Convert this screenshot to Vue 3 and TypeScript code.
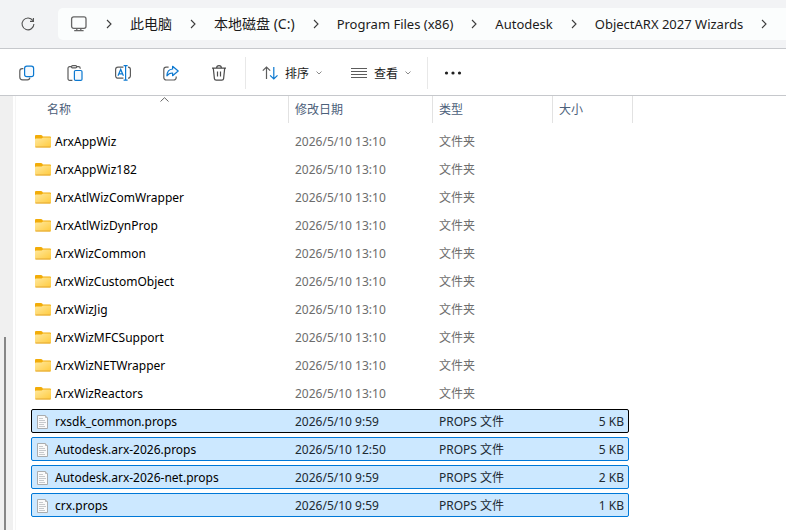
<script setup lang="ts">
interface Entry {
  name: string
  modified: string
  kind: string
  size: string
  selected: boolean
}

interface Crumb {
  label: string
  latin: boolean
}

const crumbs: Crumb[] = [
  { label: '此电脑', latin: false },
  { label: '本地磁盘 (C:)', latin: false },
  { label: 'Program Files (x86)', latin: true },
  { label: 'Autodesk', latin: true },
  { label: 'ObjectARX 2027 Wizards', latin: true },
]

const folderNames: string[] = [
  'ArxAppWiz',
  'ArxAppWiz182',
  'ArxAtlWizComWrapper',
  'ArxAtlWizDynProp',
  'ArxWizCommon',
  'ArxWizCustomObject',
  'ArxWizJig',
  'ArxWizMFCSupport',
  'ArxWizNETWrapper',
  'ArxWizReactors',
]

const folders: Entry[] = folderNames.map((name) => ({
  name,
  modified: '2026/5/10 13:10',
  kind: '文件夹',
  size: '',
  selected: false,
}))

const files: Entry[] = [
  { name: 'rxsdk_common.props', modified: '2026/5/10 9:59', kind: 'PROPS 文件', size: '5 KB', selected: true },
  { name: 'Autodesk.arx-2026.props', modified: '2026/5/10 12:50', kind: 'PROPS 文件', size: '5 KB', selected: true },
  { name: 'Autodesk.arx-2026-net.props', modified: '2026/5/10 9:59', kind: 'PROPS 文件', size: '2 KB', selected: true },
  { name: 'crx.props', modified: '2026/5/10 9:59', kind: 'PROPS 文件', size: '1 KB', selected: true },
]

const entries: Entry[] = [...folders, ...files]
const focusedName = 'rxsdk_common.props'
</script>

<template>
  <div class="explorer">
    <header class="address-bar">
      <button class="refresh" type="button" aria-label="刷新">
        <svg width="16" height="16" viewBox="0 0 16 16" fill="none" stroke="#505050" stroke-width="1.1">
          <path d="M12.9 4.6A5.9 5.9 0 1 0 13.9 8" />
          <path d="M13.4 2V5.4H10" />
        </svg>
      </button>
      <nav class="crumbs">
        <button class="crumb-icon" type="button" aria-label="位置">
          <svg width="18" height="16" viewBox="0 0 18 16" fill="none" stroke="#666" stroke-width="1.3">
            <rect x="1.6" y="0.9" width="14.4" height="11.4" rx="2" />
            <path d="M6.8 12.3V14.4M10.8 12.3V14.4M4.2 14.6H13.6" />
          </svg>
        </button>
        <template v-for="crumb in crumbs" :key="crumb.label">
          <svg class="chevron" width="6" height="10" viewBox="0 0 6 10" fill="none" stroke="#3c3c3c" stroke-width="1.1">
            <path d="M1 1L5 5L1 9" />
          </svg>
          <a class="crumb" :class="{ latin: crumb.latin }" href="#">{{ crumb.label }}</a>
        </template>
        <svg class="chevron" width="6" height="10" viewBox="0 0 6 10" fill="none" stroke="#3c3c3c" stroke-width="1.1">
          <path d="M1 1L5 5L1 9" />
        </svg>
      </nav>
    </header>

    <div class="toolbar" role="toolbar">
      <div class="tools">
        <button class="tool" type="button" aria-label="复制">
          <svg width="16" height="16" viewBox="0 0 16 16" fill="none" stroke-width="1.2">
            <path d="M4.4 3.6H3.2A2.4 2.4 0 0 0 .8 6V12A2.8 2.8 0 0 0 3.6 14.8H8.4A2.4 2.4 0 0 0 10.8 12.6" stroke="#5c5c5c" />
            <rect x="5.6" y="1.1" width="9" height="10.6" rx="2.2" stroke="#0b78d0" fill="#f4f9fe" />
          </svg>
        </button>
        <button class="tool" type="button" aria-label="粘贴">
          <svg width="16" height="16" viewBox="0 0 16 16" fill="none" stroke-width="1.2">
            <path d="M4.5 1.6H2.6A1.6 1.6 0 0 0 1 3.2V13.8A1.6 1.6 0 0 0 2.6 15.4H5.4M9.6 1.6H11.6A1.6 1.6 0 0 1 13.2 3.2V3.8" stroke="#5c5c5c" />
            <rect x="4.5" y="0.6" width="5.2" height="2.2" rx="1.1" stroke="#5c5c5c" />
            <rect x="7.4" y="5.5" width="7.6" height="9.9" rx="1.2" stroke="#0b78d0" fill="#f4f9fe" />
          </svg>
        </button>
        <button class="tool" type="button" aria-label="重命名">
          <svg width="16" height="16" viewBox="0 0 16 16" fill="none" stroke-width="1.2">
            <path d="M8.4 2.2H3A2.4 2.4 0 0 0 .6 4.6V10.8A2.4 2.4 0 0 0 3 13.2H8.4M13 2.2A2.4 2.4 0 0 1 15.4 4.6V10.8A2.4 2.4 0 0 1 13 13.2" stroke="#5c5c5c" />
            <path d="M3 10.8L5.7 4.4L8.4 10.8M3.9 8.8H7.5M8.6.6H12.6M10.6.6V15.2M8.6 15.2H12.6" stroke="#0b78d0" />
          </svg>
        </button>
        <button class="tool" type="button" aria-label="共享">
          <svg width="16" height="16" viewBox="0 0 16 16" fill="none" stroke-width="1.2" stroke-linejoin="round">
            <path d="M5.6 2.2H3.2A2.4 2.4 0 0 0 .8 4.6V12.6A2.4 2.4 0 0 0 3.2 15H10.8A2.4 2.4 0 0 0 13.2 12.6V11.6" stroke="#5c5c5c" />
            <path d="M9.6 1.3L15.2 6L9.6 10.7V8C7 8 5.2 8.8 3.9 10.8C4 7.2 6.2 4.3 9.6 4Z" stroke="#0b78d0" fill="#f4f9fe" />
          </svg>
        </button>
        <button class="tool" type="button" aria-label="删除">
          <svg width="16" height="16" viewBox="0 0 16 16" fill="none" stroke="#4c4c4c" stroke-width="1.2">
            <path d="M1 3.1H15M5.6 3A2.4 2.4 0 0 1 10.4 3M2.3 3.1L3.4 13.6A1.8 1.8 0 0 0 5.2 15.2H10.8A1.8 1.8 0 0 0 12.6 13.6L13.7 3.1M6.5 6.4V11.6M9.5 6.4V11.6" />
          </svg>
        </button>
      </div>
      <div class="group">
        <button class="menu" type="button">
          <svg width="16" height="16" viewBox="0 0 16 16" fill="none" stroke-width="1.2">
            <path d="M4.5 14V2M.8 5.7L4.5 2L8.2 5.7" stroke="#5c5c5c" />
            <path d="M11.8 2V14M8.1 10.3L11.8 14L15.5 10.3" stroke="#0b78d0" />
          </svg>
          <span>排序</span>
          <svg class="caret" width="6" height="4" viewBox="0 0 6 4" fill="none" stroke="#8a8a8a"><path d="M.5.5L3 3L5.5.5" /></svg>
        </button>
        <button class="menu" type="button">
          <svg width="16" height="16" viewBox="0 0 16 16" stroke="#5c5c5c"><path d="M0 3.5H16M0 6.5H16M0 9.5H16M0 12.5H16" /></svg>
          <span>查看</span>
          <svg class="caret" width="6" height="4" viewBox="0 0 6 4" fill="none" stroke="#8a8a8a"><path d="M.5.5L3 3L5.5.5" /></svg>
        </button>
      </div>
      <div class="group">
        <button class="more" type="button" aria-label="更多">
          <svg width="18" height="4" viewBox="0 0 18 4" fill="#1f1f1f">
            <circle cx="2.5" cy="2" r="1.6" /><circle cx="9" cy="2" r="1.6" /><circle cx="15.5" cy="2" r="1.6" />
          </svg>
        </button>
      </div>
    </div>

    <main class="body">
      <aside class="tree-edge"><span class="tree-scroll"></span></aside>
      <div class="listing">
        <table class="files">
          <thead>
            <tr>
              <th scope="col" aria-sort="ascending">
                名称
                <svg class="sort" width="9" height="5" viewBox="0 0 9 5" fill="none" stroke="#666"><path d="M.5 4.5L4.5.7L8.5 4.5" /></svg>
              </th>
              <th scope="col">修改日期</th>
              <th scope="col">类型</th>
              <th scope="col">大小</th>
            </tr>
          </thead>
          <tbody>
            <tr
              v-for="entry in entries"
              :key="entry.name"
              :class="{ selected: entry.selected, focused: entry.name === focusedName }"
            >
              <td class="name">
                <svg v-if="entry.selected" width="16" height="16" viewBox="0 0 16 16">
                  <path d="M2.5 1.5H10.5L12.5 3.5V14.5H2.5Z" fill="#fafafa" stroke="#a9acae" />
                  <path d="M10.5 1.5V3.5H12.5" fill="#e4e4e4" stroke="#b4b6b8" />
                  <path d="M4 4.5H8M4 6.5H10M4 8.5H11M4 10.5H9M4 12.5H10" stroke="#c6c9cc" />
                </svg>
                <svg v-else width="16" height="16" viewBox="0 0 16 16">
                  <defs>
                    <linearGradient id="folder-face" x1="0" y1="0" x2="1" y2="1">
                      <stop offset="0" stop-color="#ffe9a0" />
                      <stop offset="1" stop-color="#ffca3c" />
                    </linearGradient>
                  </defs>
                  <path d="M0 2Q0 1 1 1H6Q6.8 1 7.2 1.6L7.8 2.5H15Q16 2.5 16 3.5V8H0Z" fill="#f2ac08" />
                  <path d="M0 5.4Q0 4.6 1 4.6H6.6L8 3.5H15Q16 3.5 16 4.5V12.5Q16 13.5 15 13.5H1Q0 13.5 0 12.5Z" fill="url(#folder-face)" />
                  <path d="M.5 13H15.5" stroke="#e3a733" />
                </svg>
                <span>{{ entry.name }}</span>
              </td>
              <td>{{ entry.modified }}</td>
              <td>{{ entry.kind }}</td>
              <td class="size">{{ entry.size }}</td>
            </tr>
          </tbody>
        </table>
      </div>
    </main>
  </div>
</template>

<style>
body {
  margin: 0;
  background: #fff;
}
</style>

<style scoped>
.explorer {
  display: flex;
  flex-direction: column;
  min-height: 100vh;
  overflow: hidden;
  font-family: "Noto Sans", "Noto Sans CJK SC", sans-serif;
  font-size: 12px;
  color: #1b1b1b;
}

button {
  display: flex;
  align-items: center;
  padding: 0;
  border: 0;
  background: none;
  font: inherit;
  color: inherit;
}

svg {
  display: block;
  flex: none;
}

.address-bar {
  display: flex;
  align-items: center;
  gap: 22px;
  padding: 8px 0 8px 20px;
  background: #f2f3f5;
  border-bottom: 1px solid #c6c8cc;
}

.crumbs {
  display: flex;
  flex: 1;
  align-items: center;
  gap: 18px;
  height: 32px;
  padding-left: 12px;
  background: #fbfdfd;
  border-radius: 5px 0 0 5px;
  white-space: nowrap;
}

.crumb {
  color: inherit;
  font-size: 14px;
  line-height: 20px;
  text-decoration: none;
}

.latin {
  font-size: 13px;
}

.toolbar {
  display: flex;
  align-items: center;
  height: 47px;
  padding-top: 2px;
  box-sizing: border-box;
  border-bottom: 1px solid #c6c8cc;
}

.tools {
  display: flex;
  gap: 32px;
  padding: 0 18px 0 19px;
}

.group {
  display: flex;
  align-items: center;
  gap: 29px;
  height: 32px;
  padding: 0 16px;
  border-left: 1px solid #e8e8e8;
}

.menu {
  gap: 7px;
}

.body {
  display: flex;
  flex: 1;
}

.tree-edge {
  display: flex;
  align-items: flex-end;
  width: 13px;
  padding-left: 4px;
  box-sizing: border-box;
  background: #f0f0f0;
}

.tree-scroll {
  width: 2px;
  height: 193px;
  background: #868686;
}

.listing {
  flex: 1;
  margin-left: 2px;
  padding: 0 0 12px 15px;
  border-left: 1px solid #f5f5f5;
}

.files,
.files thead,
.files tbody {
  display: block;
}

.files {
  width: 598px;
}

.files tr {
  display: grid;
  grid-template-columns: 257px 144px 120px 1fr;
}

.files thead tr {
  padding-left: 1px;
}

.files th {
  position: relative;
  height: 27px;
  padding: 1px 6px 0;
  box-sizing: border-box;
  border-right: 1px solid #e2e2e2;
  color: #4c607a;
  font-weight: 400;
  line-height: 26px;
  text-align: left;
}

.files th:first-child {
  padding-left: 15px;
}

.files th:last-child {
  margin-right: -4px;
}

.sort {
  position: absolute;
  top: 1px;
  left: 50%;
}

.files tbody {
  display: flex;
  flex-direction: column;
  gap: 4px;
  padding-top: 6px;
}

.files tbody tr {
  height: 24px;
  box-sizing: border-box;
  border: 1px solid transparent;
  border-radius: 2px;
}

.files td {
  padding: 1px 6px 0;
  color: #6d6d6d;
  line-height: 22px;
  white-space: nowrap;
}

.files .name {
  display: flex;
  align-items: center;
  gap: 4px;
  padding: 1px 3px 0;
  color: #000;
}

.files .name svg {
  margin-bottom: 1px;
}

.files .size {
  padding-right: 4px;
  text-align: right;
}

.files .selected {
  background: #cce8ff;
  border-color: #0078d7;
}

.files .selected td {
  color: #202a33;
}

.files .selected .name {
  color: #000;
}

.files .focused {
  border-color: #000;
}
</style>
